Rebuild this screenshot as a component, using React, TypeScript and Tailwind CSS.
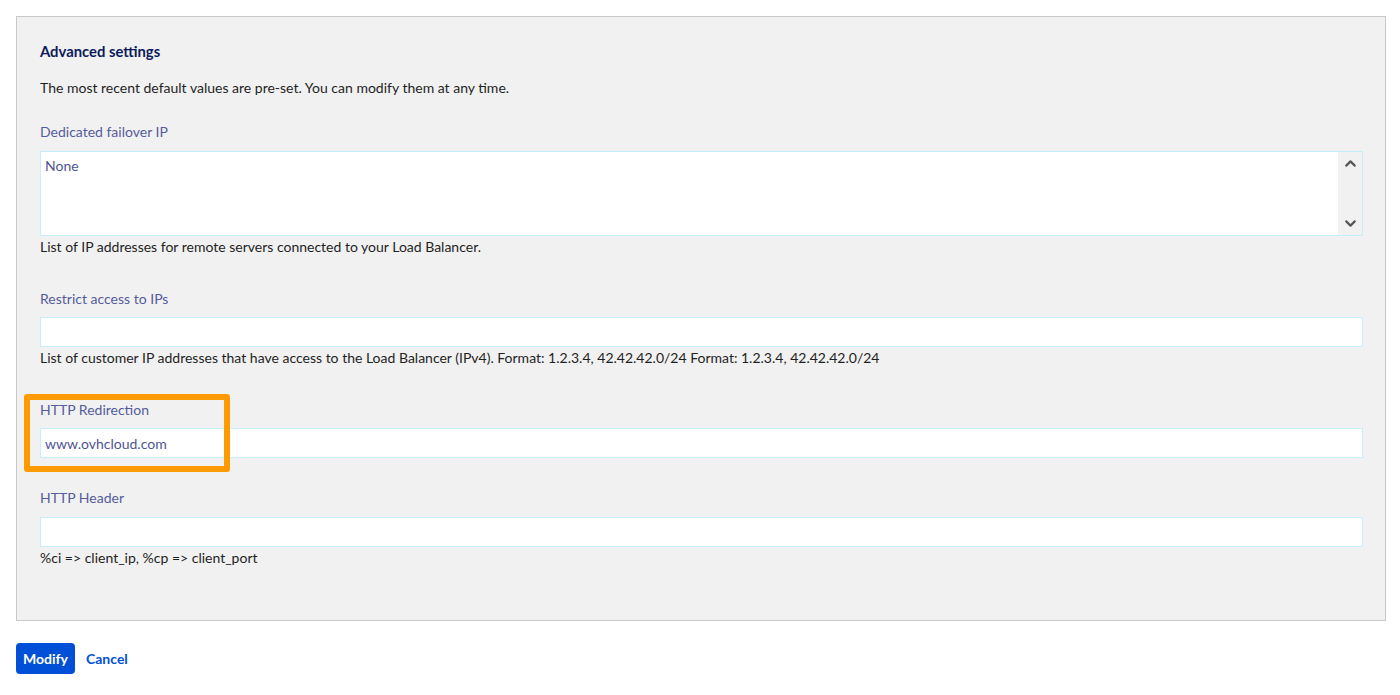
import React from 'react';
import { ChevronUp, ChevronDown } from 'lucide-react';

const labelCls = 'block text-[14px] leading-5 text-[#555c9c]';
const helpCls = 'text-[14px] leading-5 text-[#1f1f1f]';
const inputCls =
  'w-full h-[30px] border border-[#c6eefc] bg-white px-[4px] text-[14px] text-[#4d5593] outline-none';

const App: React.FC = () => {
  return (
    <div className="min-h-screen bg-white pt-[16px] pl-[16px] pr-[14px] font-['Lato',sans-serif]">
      {/* Advanced settings panel */}
      <div className="border border-[#c9c9c9] bg-[#f1f1f1] pl-[23px] pr-[22px] pt-[24px] pb-[52px]">
        <h3 className="text-[14.8px] leading-5 font-bold text-[#0c1a5b]">Advanced settings</h3>
        <p className={`${helpCls} mt-[17px]`}>
          The most recent default values are pre-set. You can modify them at any time.
        </p>

        {/* Dedicated failover IP */}
        <div className="mt-[24px]">
          <label className={labelCls}>Dedicated failover IP</label>
          <div className="mt-[9px] flex h-[85px] border border-[#c6eefc] bg-white">
            <div className="flex-1 px-[4px] pt-[4px] text-[14px] leading-5 text-[#4d5593]">None</div>
            <div className="flex w-[24px] flex-col items-center justify-between bg-[#f1f1f1] py-[3px] text-[#555]">
              <ChevronUp size={17} strokeWidth={3} />
              <ChevronDown size={17} strokeWidth={3} />
            </div>
          </div>
          <p className={`${helpCls} mt-px`}>
            List of IP addresses for remote servers connected to your Load Balancer.
          </p>
        </div>

        {/* Restrict access */}
        <div className="mt-[32px]">
          <label className={labelCls}>Restrict access to IPs</label>
          <input className={`${inputCls} mt-[8px]`} defaultValue="" />
          <p className={`${helpCls} mt-px`}>
            List of customer IP addresses that have access to the Load Balancer (IPv4). Format: 1.2.3.4,
            42.42.42.0/24 Format: 1.2.3.4, 42.42.42.0/24
          </p>
        </div>

        {/* HTTP Redirection, highlighted */}
        <div className="relative mt-[32px]">
          <div className="pointer-events-none absolute left-[-16px] top-[-6px] h-[78px] w-[206px] rounded-[3px] border-[6px] border-[#ff9a00]" />
          <label className={labelCls}>HTTP Redirection</label>
          <input className={`${inputCls} mt-[8px]`} defaultValue="www.ovhcloud.com" />
        </div>

        {/* HTTP Header */}
        <div className="mt-[30px]">
          <label className={labelCls}>HTTP Header</label>
          <input className={`${inputCls} mt-[9px]`} defaultValue="" />
          <p className={`${helpCls} mt-px`}>%ci =&gt; client_ip, %cp =&gt; client_port</p>
        </div>
      </div>

      <div className="mt-[22px] flex items-center gap-[11px]">
        <button className="h-[31px] w-[59px] rounded-[4px] bg-[#0050d7] text-[14px] font-bold text-white">
          Modify
        </button>
        <button className="text-[14px] font-bold text-[#0050d7]">Cancel</button>
      </div>
    </div>
  );
};

export default App;
